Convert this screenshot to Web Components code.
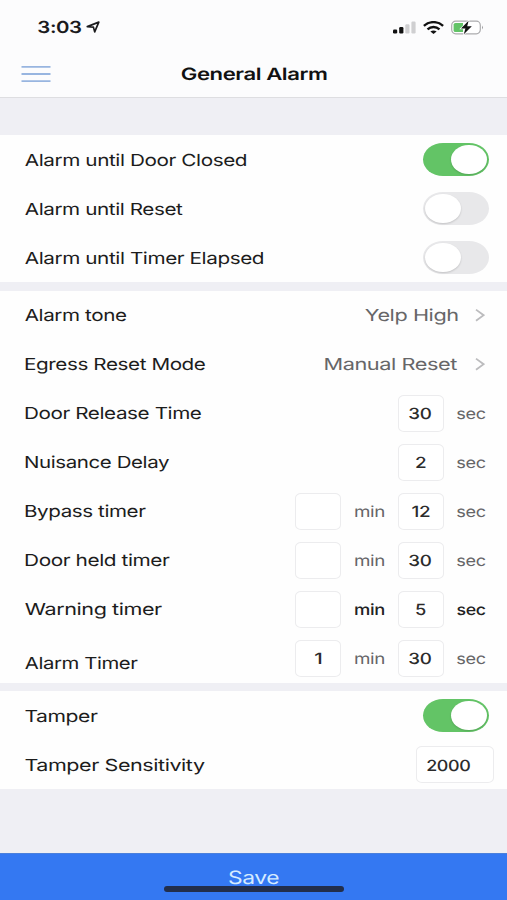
<!DOCTYPE html>
<html lang="en">
<head>
<meta charset="utf-8">
<title>General Alarm</title>
<style>
html,body{margin:0;height:100%;background:#efeff4;overflow:hidden}
body{font-family:Inter,"Liberation Sans",sans-serif;color:#1c1c1c}
</style>
</head>
<body>
<alarm-app></alarm-app>
<script>
const ctx = document.createElement('canvas').getContext('2d');

// Single line of text whose ink is fitted to the width given in "w".
class FitText extends HTMLElement {
  constructor(){
    super();
    this.attachShadow({mode:'open'}).innerHTML = `<style>
      :host{display:inline-block;flex:none;white-space:nowrap;line-height:20px;height:20px;text-rendering:geometricPrecision;letter-spacing:-.02em}
      span{display:inline-block;transform-origin:0 50%}
    </style><span><slot></slot></span>`;
  }
  connectedCallback(){
    const w = +this.getAttribute('w'), size = +(this.getAttribute('size') || 16.6),
          weight = this.getAttribute('weight') || 400,
          dy = +(this.getAttribute('dy') || 1);
    this.style.width = w + 'px';
    this.style.fontSize = size + 'px';
    this.style.fontWeight = weight;
    // Measured at ten times the size, so that rounding of the glyph bounds does not show.
    ctx.font = `${weight} ${size * 10}px Inter, "Liberation Sans", sans-serif`;
    ctx.letterSpacing = -size * .2 + 'px';
    const m = ctx.measureText(this.textContent);
    const left = m.actualBoundingBoxLeft / 10, right = m.actualBoundingBoxRight / 10;
    const k = (w - .8) / (left + right);
    const stem = /^[BDEGN]/.test(this.textContent) ? .8 : .3;
    this.shadowRoot.querySelector('span').style.transform =
      `translate(${left * k + stem}px,${dy}px) scaleX(${k})`;
  }
}

class ToggleSwitch extends HTMLElement {
  constructor(){
    super();
    this.attachShadow({mode:'open'}).innerHTML = `<style>
      :host{display:flex;flex:none;box-sizing:border-box;align-items:center;width:66.5px;height:33px;border-radius:20px/16.5px;background:#e8e8ea;padding:0 2px;margin-right:-3.5px}
      :host([on]){background:#63c466;justify-content:flex-end}
      i{width:36px;height:29.5px;border-radius:50%;background:#fff;box-shadow:0 1px 2px rgba(0,0,0,.16)}
    </style><i></i>`;
  }
}

class NumberBox extends HTMLElement {
  constructor(){
    super();
    this.attachShadow({mode:'open'}).innerHTML = `<style>
      :host{display:flex;flex:none;box-sizing:border-box;align-items:center;justify-content:center;width:46px;height:37px;border:1px solid #ececee;border-radius:6px/5px;background:#fff;color:#2b2b2b}
      :host([wide]){width:78px;margin-right:-8.5px;justify-content:flex-start;padding-left:9.5px}
    </style><slot></slot>`;
  }
}

class ChevronRight extends HTMLElement {
  constructor(){
    super();
    this.attachShadow({mode:'open'}).innerHTML = `<style>
      :host{display:block;flex:none;margin:0 .5px 0 4px}svg{display:block}
    </style><svg width="10" height="14" viewBox="0 0 10 14" fill="none" stroke="#bcbcbe" stroke-width="1.8"><path d="M1 1.6 8.6 7.2 1 12.8"/></svg>`;
  }
}

class SettingRow extends HTMLElement {
  constructor(){
    super();
    this.attachShadow({mode:'open'}).innerHTML = `<style>
      :host{display:flex;align-items:center;justify-content:space-between;flex:1;min-height:0;padding:0 21.3px 0 25px}
      :host([low]) .label{padding-top:10px}
      .label{display:flex}
      .end{display:flex;align-items:center;gap:13.4px;color:#666668}
      :host([dark]) .end{color:#222}
    </style><div class="label"><slot name="label"></slot></div><div class="end"><slot></slot></div>`;
  }
}

class SettingGroup extends HTMLElement {
  constructor(){
    super();
    this.attachShadow({mode:'open'}).innerHTML = `<style>
      :host{display:flex;flex-direction:column;flex:none;background:#fefefe}
    </style><slot></slot>`;
  }
}

class StatusBar extends HTMLElement {
  constructor(){
    super();
    this.attachShadow({mode:'open'}).innerHTML = `<style>
      :host{display:flex;align-items:center;height:54px;padding:0 23.5px 0 37.7px;box-sizing:border-box;color:#1b1b1d}
      .loc{margin-left:5px}.gap{flex:1}svg{display:block;flex:none}
      .wifi{margin:0 7px 0 7px}
    </style>
    <fit-text w="43.5" size="16.5" weight="600" dy=".4">3:03</fit-text>
    <svg class="loc" width="15" height="13" viewBox="0 0 15 13"><path d="M1.3 5.6 12.8 1.1 8.7 10.9 7.4 6.1Z" fill="none" stroke="#1b1b1d" stroke-width="1.7" stroke-linejoin="round"/></svg>
    <div class="gap"></div>
    <svg width="23" height="13" viewBox="0 0 23 13"><rect x="0" y="8.5" width="4.2" height="4" rx="1.2" fill="#111"/><rect x="6.2" y="6" width="4.2" height="6.5" rx="1.2" fill="#111"/><rect x="12.3" y="3.2" width="4.2" height="9.3" rx="1.2" fill="#cfcfd1"/><rect x="18.4" y=".5" width="4.2" height="12" rx="1.2" fill="#cfcfd1"/></svg>
    <svg class="wifi" width="21" height="13" viewBox="0 0 21 13"><g fill="none" stroke="#111" stroke-width="2.4"><path d="M.9 4.8C6.2-.1 14.8-.1 20.1 4.8"/><path d="M4.5 8.3C8 5.3 13 5.3 16.5 8.3"/></g><path d="M7.4 10.5Q10.5 8.4 13.6 10.5L10.5 13Z" fill="#111"/></svg>
    <svg width="33" height="15" viewBox="0 0 33 15"><rect x=".7" y="1.2" width="28.6" height="12.6" rx="4" fill="#fff" stroke="#acacae" stroke-width="1.2"/><path d="M4.5 2.9H12V12.1H4.5Q2.6 12.1 2.6 10.4V4.6Q2.6 2.9 4.5 2.9Z" fill="#62c367"/><path d="M31 5.6Q32.8 7.5 31 9.4Z" fill="#8c8c8e"/><path d="M17.6.8 10 8.6H14.4L12.8 14.2 20.8 6.3H16.2Z" fill="#111" stroke="#fcfcfd" stroke-width="1.4" paint-order="stroke"/></svg>`;
  }
}

class NavBar extends HTMLElement {
  constructor(){
    super();
    this.attachShadow({mode:'open'}).innerHTML = `<style>
      :host{display:grid;grid-template-columns:1fr auto 1fr;align-items:center;height:43.5px;padding:0 21px;box-sizing:border-box;padding-bottom:3px;border-bottom:1px solid #dedee1;color:#111}
      svg{display:block}
    </style>
    <svg width="30" height="18" viewBox="0 0 30 18" stroke="#98b5e0" stroke-width="1.8"><path d="M.5 1.8H29.5M.5 9H29.5M.5 16.1H29.5"/></svg>
    <fit-text w="145.5" size="17" weight="600" dy="1.1">General Alarm</fit-text>`;
  }
}

class SaveBar extends HTMLElement {
  constructor(){
    super();
    this.attachShadow({mode:'open'}).innerHTML = `<style>
      :host{display:flex;flex-direction:column;align-items:center;height:47px;box-sizing:border-box;background:#3478f2;border-top:1px solid #4b80dc;padding-top:13px;color:#d5ebff}
      i{width:180px;height:5.5px;border-radius:3px;background:#222e4b;margin-top:-.7px;z-index:1}
    </style><fit-text w="50" size="18.3" dy=".8">Save</fit-text><i></i>`;
  }
}

class AlarmApp extends HTMLElement {
  constructor(){
    super();
    const row = (label, w, end, attrs='') => `<setting-row ${attrs}><fit-text slot="label" w="${w}">${label}</fit-text>${end}</setting-row>`;
    const inkW = {'30':22.3,'2':10,'12':17.8,'5':9.8,'1':6.8};
    const box = n => `<number-box>${n ? `<fit-text w="${inkW[n]}" size="15.4" weight="500" dy=".8">${n}</fit-text>` : ''}</number-box>`;
    const unit = (t, wt) => `<fit-text w="${t === 'min' ? 29.5 : 28.8}" size="15.4" weight="${wt}" dy=".9">${t}</fit-text>`;
    const sec = (n, wt=400) => box(n) + unit('sec', wt);
    const min = (n, wt=400) => box(n) + unit('min', wt);
    const pick = (t, w) => `<fit-text w="${w}" dy=".6">${t}</fit-text><chevron-right></chevron-right>`;
    this.attachShadow({mode:'open'}).innerHTML = `<style>
      :host{display:flex;flex-direction:column;height:900px;width:507px;background:#efeff4}
      header{background:#fcfcfd;flex:none;height:97.5px;margin-bottom:37.5px}
      .a{height:147px;margin-bottom:8.5px}
      .b{height:392.5px;margin-bottom:8px}
      .c{height:98px}
      save-bar{margin-top:auto}
    </style>
    <header><status-bar></status-bar><nav-bar></nav-bar></header>
    <setting-group class="a">
      ${row('Alarm until Door Closed',221.5,'<toggle-switch on></toggle-switch>')}
      ${row('Alarm until Reset',158,'<toggle-switch></toggle-switch>')}
      ${row('Alarm until Timer Elapsed',238.5,'<toggle-switch></toggle-switch>')}
    </setting-group>
    <setting-group class="b">
      ${row('Alarm tone',101.5,pick('Yelp High',93))}
      ${row('Egress Reset Mode',180,pick('Manual Reset',132.5))}
      ${row('Door Release Time',176,sec('30'))}
      ${row('Nuisance Delay',144,sec('2'))}
      ${row('Bypass timer',120.5,min('')+sec('12'))}
      ${row('Door held timer',144.5,min('')+sec('30'))}
      ${row('Warning timer',137.3,min('',500)+sec('5',500),'dark')}
      ${row('Alarm Timer',113,min('1')+sec('30'),'low')}
    </setting-group>
    <setting-group class="c">
      ${row('Tamper',73,'<toggle-switch on></toggle-switch>')}
      ${row('Tamper Sensitivity',180,'<number-box wide><fit-text w="43.3" size="15.4" weight="500" dy=".6">2000</fit-text></number-box>')}
    </setting-group>
    <save-bar></save-bar>`;
  }
}

customElements.define('fit-text', FitText);
customElements.define('toggle-switch', ToggleSwitch);
customElements.define('number-box', NumberBox);
customElements.define('chevron-right', ChevronRight);
customElements.define('setting-row', SettingRow);
customElements.define('setting-group', SettingGroup);
customElements.define('status-bar', StatusBar);
customElements.define('nav-bar', NavBar);
customElements.define('save-bar', SaveBar);
customElements.define('alarm-app', AlarmApp);
</script>
</body>
</html>
